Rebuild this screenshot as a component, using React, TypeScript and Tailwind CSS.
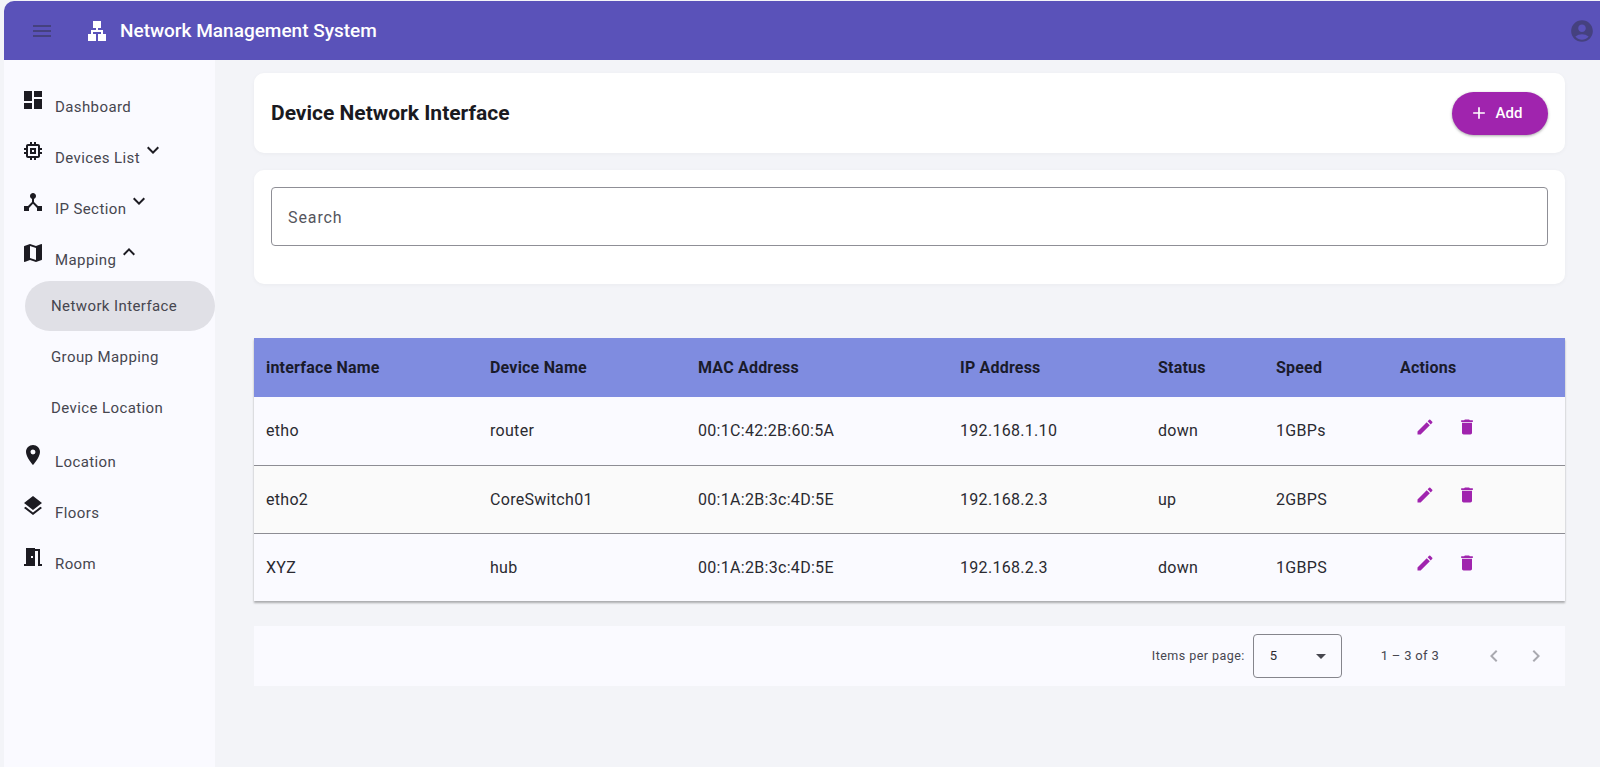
import React from "react";
import {
  MdAccountCircle,
  MdAdd,
  MdArrowDropDown,
  MdChevronLeft,
  MdChevronRight,
  MdDashboard,
  MdDelete,
  MdDeviceHub,
  MdEdit,
  MdKeyboardArrowDown,
  MdKeyboardArrowUp,
  MdLan,
  MdLayers,
  MdLocationOn,
  MdMap,
  MdMemory,
  MdMenu,
  MdMeetingRoom,
} from "react-icons/md";

const ROWS = [
  { name: "etho", device: "router", mac: "00:1C:42:2B:60:5A", ip: "192.168.1.10", status: "down", speed: "1GBPs", bg: "bg-[#fafaff]" },
  { name: "etho2", device: "CoreSwitch01", mac: "00:1A:2B:3c:4D:5E", ip: "192.168.2.3", status: "up", speed: "2GBPS", bg: "bg-[#fafafa]" },
  { name: "XYZ", device: "hub", mac: "00:1A:2B:3c:4D:5E", ip: "192.168.2.3", status: "down", speed: "1GBPS", bg: "bg-[#fafaff]" },
];

function NavItem({
  icon: Icon,
  label,
  arrow,
}: {
  icon: React.ComponentType<{ className?: string }>;
  label: string;
  arrow?: "up" | "down";
}) {
  return (
    <div className="flex h-[40px] items-start pl-[17px]">
      <Icon className="h-[24px] w-[24px] shrink-0 text-[#1c1b22]" />
      <span className="ml-[10px] mt-[9px] text-[15px] leading-[20px] tracking-[0.4px] text-[#46464f]">{label}</span>
      {arrow === "down" && <MdKeyboardArrowDown className="ml-[1px] mt-[-1px] h-[24px] w-[24px] text-[#1c1b22]" />}
      {arrow === "up" && <MdKeyboardArrowUp className="ml-[1px] mt-[-1px] h-[24px] w-[24px] text-[#1c1b22]" />}
    </div>
  );
}

function SubItem({ label, active }: { label: string; active?: boolean }) {
  return (
    <div
      className={`ml-[25px] mb-[1px] flex h-[50px] w-[190px] items-center rounded-full pl-[26px] text-[15px] tracking-[0.4px] text-[#46464f] ${
        active ? "bg-[#e0e0e6]" : ""
      }`}
    >
      {label}
    </div>
  );
}

export default function App() {
  return (
    <div className="flex h-[767px] w-full flex-col overflow-hidden bg-[#f3f4f8] pl-[4px] pt-[1px] font-['Roboto',sans-serif]">
      {/* top bar */}
      <header className="flex h-[59px] shrink-0 items-center rounded-tl-[10px] bg-[#5a52b9] pl-[26px] pr-[5px]">
        <MdMenu className="h-[24px] w-[24px] text-[#45417f]" />
        <MdLan className="ml-[31px] h-[24px] w-[24px] text-white" />
        <span className="ml-[11px] pt-[1px] text-[19px] font-medium text-white">Network Management System</span>
        <MdAccountCircle className="ml-auto h-[26px] w-[26px] text-[#45417f]" />
      </header>

      <div className="flex min-h-0 flex-1">
        {/* sidebar */}
        <aside className="w-[211px] shrink-0 bg-[#fafaff] pt-[28px]">
          <div className="flex flex-col gap-[11px]">
            <NavItem icon={MdDashboard} label="Dashboard" />
            <NavItem icon={MdMemory} label="Devices List" arrow="down" />
            <NavItem icon={MdDeviceHub} label="IP Section" arrow="down" />
          </div>
          <div className="mt-[11px]">
            <NavItem icon={MdMap} label="Mapping" arrow="up" />
          </div>
          <div className="-ml-[4px] mb-[10px]">
            <SubItem label="Network Interface" active />
            <SubItem label="Group Mapping" />
            <SubItem label="Device Location" />
          </div>
          <div className="flex flex-col gap-[11px]">
            <NavItem icon={MdLocationOn} label="Location" />
            <NavItem icon={MdLayers} label="Floors" />
            <NavItem icon={MdMeetingRoom} label="Room" />
          </div>
        </aside>

        {/* main */}
        <main className="min-w-0 flex-1 bg-[#f3f4f8] pl-[39px] pr-[35px] pt-[13px]">
          <section className="flex h-[80px] items-center justify-between rounded-[10px] bg-white pl-[17px] pr-[17px] shadow-[0_1px_4px_rgba(0,0,0,0.04)]">
            <h1 className="pt-[1px] text-[21px] font-bold text-[#1a1a1f]">Device Network Interface</h1>
            <button className="flex h-[43px] w-[96px] items-center justify-center rounded-full bg-[#a024ae] pr-[9px] text-[15px] font-medium text-white shadow-[0_1px_3px_rgba(0,0,0,0.35)]">
              <MdAdd className="h-[20px] w-[20px]" />
              <span className="ml-[7px]">Add</span>
            </button>
          </section>

          <section className="mt-[17px] h-[114px] rounded-[10px] bg-white px-[17px] pt-[17px] shadow-[0_1px_4px_rgba(0,0,0,0.04)]">
            <div className="flex h-[59px] items-center rounded-[4px] border border-[#8f8f96] pl-[16px] pt-[3px] text-[16px] tracking-[0.9px] text-[#55555d]">
              Search
            </div>
          </section>

          <table className="mt-[54px] w-full table-fixed border-collapse text-left text-[16px] tracking-[0.3px] text-[#2a2a31] shadow-[0_2px_2px_rgba(0,0,0,0.3)]">
            <colgroup>
              <col className="w-[224px]" />
              <col className="w-[208px]" />
              <col className="w-[262px]" />
              <col className="w-[198px]" />
              <col className="w-[118px]" />
              <col className="w-[124px]" />
              <col />
            </colgroup>
            <thead>
              <tr className="h-[59px] bg-[#7f8ce0] text-[#1a1b2b]">
                {["interface Name", "Device Name", "MAC Address", "IP Address", "Status", "Speed", "Actions"].map((h) => (
                  <th key={h} className="pl-[12px] font-bold tracking-[0.2px]">
                    {h}
                  </th>
                ))}
              </tr>
            </thead>
            <tbody>
              {ROWS.map((r, i) => (
                <tr key={r.name} className={`h-[68px] ${r.bg} ${i < 2 ? "border-b border-[#8d8d94]" : ""}`}>
                  <td className="pl-[12px] pt-[1px]">{r.name}</td>
                  <td className="pl-[12px] pt-[1px]">{r.device}</td>
                  <td className="pl-[12px] pt-[1px]">{r.mac}</td>
                  <td className="pl-[12px] pt-[1px]">{r.ip}</td>
                  <td className="pl-[12px] pt-[1px]">{r.status}</td>
                  <td className="pl-[12px] pt-[1px]">{r.speed}</td>
                  <td className="pl-[12px]">
                    <div className="-mt-[8px] flex items-center gap-[22px] pl-[15px] text-[#a024ae]">
                      <MdEdit className="h-[20px] w-[20px]" />
                      <MdDelete className="h-[20px] w-[20px]" />
                    </div>
                  </td>
                </tr>
              ))}
            </tbody>
          </table>

          {/* pagination */}
          <div className="mt-[25px] flex h-[60px] items-center bg-[#fafaff] text-[#46464f]">
            <span className="ml-auto text-[12.5px] tracking-[0.45px]">Items per page:</span>
            <div className="ml-[8px] flex h-[44px] w-[89px] items-center justify-between rounded-[4px] border border-[#85858c] pl-[16px] pr-[8px] text-[13px] text-[#2a2a31]">
              5
              <MdArrowDropDown className="h-[24px] w-[24px] text-[#46464f]" />
            </div>
            <span className="ml-[39px] text-[13px] tracking-[0.3px]">1 – 3 of 3</span>
            <MdChevronLeft className="ml-[43px] h-[24px] w-[24px] text-[#a9a9b0]" />
            <MdChevronRight className="ml-[18px] mr-[17px] h-[24px] w-[24px] text-[#a9a9b0]" />
          </div>
        </main>
      </div>
    </div>
  );
}
